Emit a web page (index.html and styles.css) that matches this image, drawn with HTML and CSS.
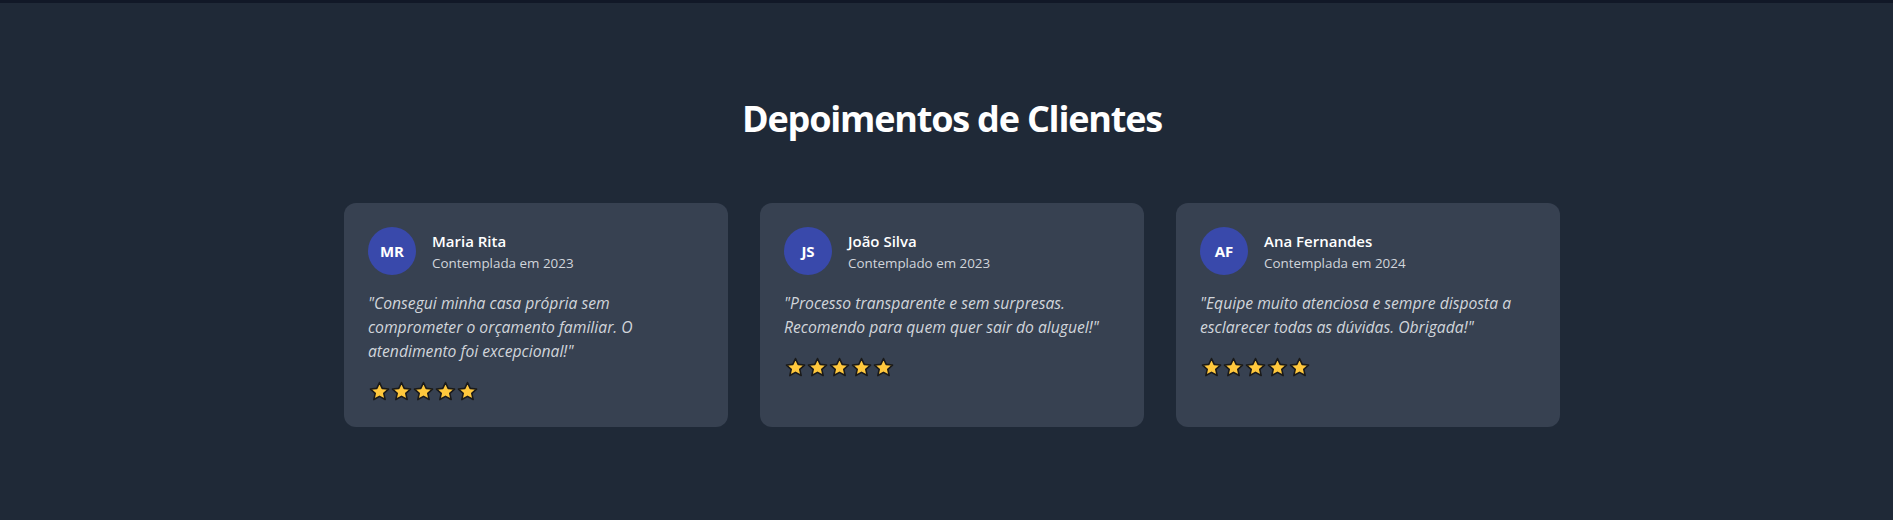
FILE: index.html
```html
<!DOCTYPE html>
<html lang="pt-BR">
<head>
<meta charset="utf-8">
<title>Depoimentos de Clientes</title>
<link rel="stylesheet" href="styles.css">
</head>
<body>
<div class="topbar"></div>
<section class="testimonials">
  <div class="container">
    <h2 class="title">Depoimentos de Clientes</h2>
    <div class="grid">
      <article class="card">
        <div class="head">
          <div class="avatar">MR</div>
          <div class="who">
            <div class="name">Maria Rita</div>
            <div class="since">Contemplada em 2023</div>
          </div>
        </div>
        <p class="quote">"Consegui minha casa própria sem comprometer o orçamento familiar. O atendimento foi excepcional!"</p>
        <div class="stars">
          <svg class="star" viewBox="0 0 24 24"><path d="M12 1.8l3.1 6.6 7.2.8-5.4 4.9 1.6 7.1L12 17.5l-6.5 3.7 1.6-7.1-5.4-4.9 7.2-.8z"/></svg>
          <svg class="star" viewBox="0 0 24 24"><path d="M12 1.8l3.1 6.6 7.2.8-5.4 4.9 1.6 7.1L12 17.5l-6.5 3.7 1.6-7.1-5.4-4.9 7.2-.8z"/></svg>
          <svg class="star" viewBox="0 0 24 24"><path d="M12 1.8l3.1 6.6 7.2.8-5.4 4.9 1.6 7.1L12 17.5l-6.5 3.7 1.6-7.1-5.4-4.9 7.2-.8z"/></svg>
          <svg class="star" viewBox="0 0 24 24"><path d="M12 1.8l3.1 6.6 7.2.8-5.4 4.9 1.6 7.1L12 17.5l-6.5 3.7 1.6-7.1-5.4-4.9 7.2-.8z"/></svg>
          <svg class="star" viewBox="0 0 24 24"><path d="M12 1.8l3.1 6.6 7.2.8-5.4 4.9 1.6 7.1L12 17.5l-6.5 3.7 1.6-7.1-5.4-4.9 7.2-.8z"/></svg>
        </div>
      </article>
      <article class="card">
        <div class="head">
          <div class="avatar">JS</div>
          <div class="who">
            <div class="name">João Silva</div>
            <div class="since">Contemplado em 2023</div>
          </div>
        </div>
        <p class="quote">"Processo transparente e sem surpresas. Recomendo para quem quer sair do aluguel!"</p>
        <div class="stars">
          <svg class="star" viewBox="0 0 24 24"><path d="M12 1.8l3.1 6.6 7.2.8-5.4 4.9 1.6 7.1L12 17.5l-6.5 3.7 1.6-7.1-5.4-4.9 7.2-.8z"/></svg>
          <svg class="star" viewBox="0 0 24 24"><path d="M12 1.8l3.1 6.6 7.2.8-5.4 4.9 1.6 7.1L12 17.5l-6.5 3.7 1.6-7.1-5.4-4.9 7.2-.8z"/></svg>
          <svg class="star" viewBox="0 0 24 24"><path d="M12 1.8l3.1 6.6 7.2.8-5.4 4.9 1.6 7.1L12 17.5l-6.5 3.7 1.6-7.1-5.4-4.9 7.2-.8z"/></svg>
          <svg class="star" viewBox="0 0 24 24"><path d="M12 1.8l3.1 6.6 7.2.8-5.4 4.9 1.6 7.1L12 17.5l-6.5 3.7 1.6-7.1-5.4-4.9 7.2-.8z"/></svg>
          <svg class="star" viewBox="0 0 24 24"><path d="M12 1.8l3.1 6.6 7.2.8-5.4 4.9 1.6 7.1L12 17.5l-6.5 3.7 1.6-7.1-5.4-4.9 7.2-.8z"/></svg>
        </div>
      </article>
      <article class="card">
        <div class="head">
          <div class="avatar">AF</div>
          <div class="who">
            <div class="name">Ana Fernandes</div>
            <div class="since">Contemplada em 2024</div>
          </div>
        </div>
        <p class="quote">"Equipe muito atenciosa e sempre disposta a esclarecer todas as dúvidas. Obrigada!"</p>
        <div class="stars">
          <svg class="star" viewBox="0 0 24 24"><path d="M12 1.8l3.1 6.6 7.2.8-5.4 4.9 1.6 7.1L12 17.5l-6.5 3.7 1.6-7.1-5.4-4.9 7.2-.8z"/></svg>
          <svg class="star" viewBox="0 0 24 24"><path d="M12 1.8l3.1 6.6 7.2.8-5.4 4.9 1.6 7.1L12 17.5l-6.5 3.7 1.6-7.1-5.4-4.9 7.2-.8z"/></svg>
          <svg class="star" viewBox="0 0 24 24"><path d="M12 1.8l3.1 6.6 7.2.8-5.4 4.9 1.6 7.1L12 17.5l-6.5 3.7 1.6-7.1-5.4-4.9 7.2-.8z"/></svg>
          <svg class="star" viewBox="0 0 24 24"><path d="M12 1.8l3.1 6.6 7.2.8-5.4 4.9 1.6 7.1L12 17.5l-6.5 3.7 1.6-7.1-5.4-4.9 7.2-.8z"/></svg>
          <svg class="star" viewBox="0 0 24 24"><path d="M12 1.8l3.1 6.6 7.2.8-5.4 4.9 1.6 7.1L12 17.5l-6.5 3.7 1.6-7.1-5.4-4.9 7.2-.8z"/></svg>
        </div>
      </article>
    </div>
  </div>
</section>
</body>
</html>
```

FILE: styles.css
```css
* { box-sizing: border-box; }

html, body {
  margin: 0;
  padding: 0;
  background: #1f2937;
}

body {
  font-family: "Open Sans", "Noto Sans", sans-serif;
  color: #ffffff;
  padding-left: 11px;
  min-height: 520px;
}

.topbar {
  height: 3px;
  background: #111827;
  margin-left: -11px;
}

.testimonials {
  padding: 96px 0;
}

.container {
  max-width: 1216px;
  margin: 0 auto;
}

.title {
  margin: 0 0 64px;
  text-align: center;
  font-size: 36px;
  line-height: 40px;
  font-weight: 700;
  letter-spacing: -1.2px;
  color: #ffffff;
}

.grid {
  display: grid;
  grid-template-columns: repeat(3, 1fr);
  gap: 32px;
}

.card {
  background: #374151;
  border-radius: 12px;
  padding: 24px;
}

.head {
  display: flex;
  align-items: center;
  gap: 16px;
  margin-bottom: 16px;
}

.avatar {
  width: 48px;
  height: 48px;
  border-radius: 50%;
  background: #3949ab;
  color: #ffffff;
  font-weight: 700;
  font-size: 15px;
  display: flex;
  align-items: center;
  justify-content: center;
  flex-shrink: 0;
}

.name {
  font-size: 15px;
  line-height: 24px;
  font-weight: 600;
  color: #ffffff;
}

.since {
  font-size: 13.4px;
  line-height: 20px;
  color: #d1d5db;
}

.quote {
  margin: 0 0 16px;
  font-size: 15.7px;
  line-height: 24px;
  font-style: italic;
  color: #d1d5db;
}

.stars {
  display: flex;
  align-items: center;
  gap: 1px;
  height: 24px;
  padding-left: 1px;
}

.star {
  width: 21px;
  height: 21px;
  fill: #ffc83d;
  stroke: #1a1a1a;
  stroke-width: 1.8;
  stroke-linejoin: round;
}
```
